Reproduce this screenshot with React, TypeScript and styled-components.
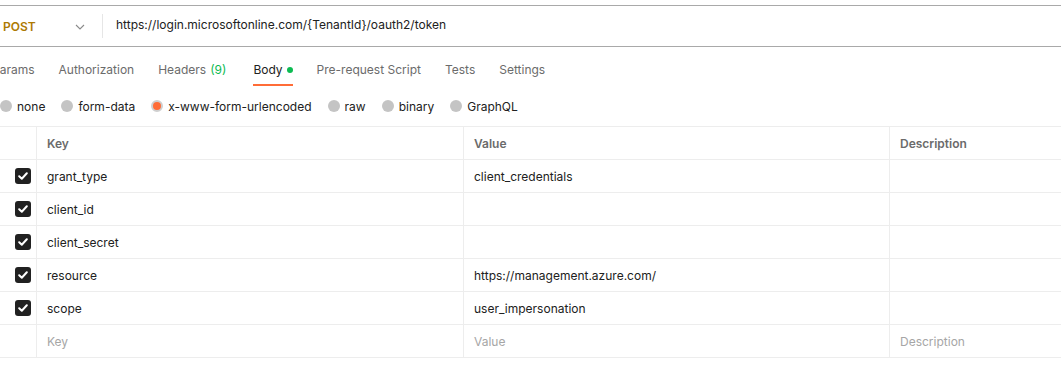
import React from 'react'
import styled, { createGlobalStyle } from 'styled-components'

const GlobalStyle = createGlobalStyle`
  html, body {
    margin: 0;
    padding: 0;
    background: #ffffff;
  }
  body {
    font-family: Inter, 'Noto Sans', 'Liberation Sans', sans-serif;
    color: #212121;
    overflow: hidden;
  }
`

const TABS = [
  { label: 'Params' },
  { label: 'Authorization' },
  { label: 'Headers', count: 9 },
  { label: 'Body', active: true, dot: true },
  { label: 'Pre-request Script' },
  { label: 'Tests' },
  { label: 'Settings' },
]

const BODY_TYPES = ['none', 'form-data', 'x-www-form-urlencoded', 'raw', 'binary', 'GraphQL']

const ROWS = [
  { key: 'grant_type', value: 'client_credentials' },
  { key: 'client_id', value: '' },
  { key: 'client_secret', value: '' },
  { key: 'resource', value: 'https://management.azure.com/' },
  { key: 'scope', value: 'user_impersonation' },
]

export default function App() {
  return (
    <Page>
      <GlobalStyle />
      <UrlBar>
        <MethodSelect>
          <Method>POST</Method>
          <svg width="10" height="6" viewBox="0 0 10 6" fill="none">
            <path d="M1 1l4 4 4-4" stroke="#8a8a8a" strokeWidth="1.1" />
          </svg>
        </MethodSelect>
        <Divider />
        <Url>https://login.microsoftonline.com/{'{TenantId}'}/oauth2/token</Url>
      </UrlBar>

      <Tabs>
        {TABS.map((tab) => (
          <Tab key={tab.label} active={!!tab.active}>
            {tab.label}
            {tab.count !== undefined && <Count>({tab.count})</Count>}
            {tab.dot && <Dot />}
          </Tab>
        ))}
      </Tabs>

      <Radios>
        {BODY_TYPES.map((type) => (
          <RadioItem key={type}>
            <Radio checked={type === 'x-www-form-urlencoded'} />
            {type}
          </RadioItem>
        ))}
      </Radios>

      <Table>
        <Row>
          <CheckCell />
          <HeadCell>Key</HeadCell>
          <HeadCell>Value</HeadCell>
          <HeadCell>Description</HeadCell>
        </Row>
        {ROWS.map((row) => (
          <Row key={row.key}>
            <CheckCell>
              <Checkbox>
                <svg width="10" height="8" viewBox="0 0 10 8" fill="none">
                  <path d="M1.2 4.2l2.6 2.5L8.8 1.3" stroke="#ffffff" strokeWidth="2" strokeLinecap="round" strokeLinejoin="round" />
                </svg>
              </Checkbox>
            </CheckCell>
            <Cell>{row.key}</Cell>
            <Cell>{row.value}</Cell>
            <Cell />
          </Row>
        ))}
        <Row>
          <CheckCell />
          <Cell placeholder>Key</Cell>
          <Cell placeholder>Value</Cell>
          <Cell placeholder>Description</Cell>
        </Row>
      </Table>
    </Page>
  )
}

const Page = styled.div`
  width: 1061px;
  height: 388px;
  overflow: hidden;
  padding-top: 5px;
  box-sizing: border-box;
`

const UrlBar = styled.div`
  display: flex;
  align-items: center;
  height: 42px;
  box-sizing: border-box;
  border-top: 1px solid #a9a9a9;
  border-bottom: 1px solid #a9a9a9;
`

const MethodSelect = styled.div`
  display: flex;
  align-items: center;
  justify-content: space-between;
  width: 86px;
  padding-left: 3px;
  padding-right: 1px;
  box-sizing: border-box;
  svg {
    margin-top: 1px;
  }
`

const Method = styled.span`
  font-size: 12px;
  font-weight: 600;
  color: #ad7a03;
  margin-top: 1px;
`

const Divider = styled.div`
  width: 1px;
  height: 24px;
  background: #e6e6e6;
  margin: 0 13px 0 16px;
`

const Url = styled.span`
  font-size: 12px;
  color: #212121;
  margin-top: -3px;
`

const Tabs = styled.div`
  display: flex;
  gap: 24px;
  margin-left: -8px;
  margin-top: 9px;
  height: 31px;
`

const Tab = styled.div<{ active: boolean }>`
  display: flex;
  align-items: center;
  height: 29px;
  font-size: 12px;
  color: ${({ active }) => (active ? '#212121' : '#6b6b6b')};
  border-bottom: 2px solid ${({ active }) => (active ? '#ff6c37' : 'transparent')};
  margin-top: -1px;
`

const Count = styled.span`
  color: #0cbb52;
  margin-left: 4px;
  margin-right: 3px;
`

const Dot = styled.span`
  width: 6px;
  height: 6px;
  border-radius: 50%;
  background: #0cbb52;
  margin-left: 4px;
  margin-top: 1px;
`

const Radios = styled.div`
  display: flex;
  gap: 16px;
  margin-top: 10px;
  height: 18px;
  align-items: center;
`

const RadioItem = styled.label`
  display: flex;
  align-items: center;
  gap: 5px;
  font-size: 12px;
  color: #212121;
`

const Radio = styled.span<{ checked: boolean }>`
  width: 12px;
  height: 12px;
  border-radius: 50%;
  box-sizing: border-box;
  background: ${({ checked }) => (checked ? '#ff6c37' : '#c4c4c4')};
  border: ${({ checked }) => (checked ? '2px solid #cfcfcf' : 'none')};
`

const Table = styled.div`
  margin-top: 11px;
  border-top: 1px solid #ededed;
`

const Row = styled.div`
  display: grid;
  grid-template-columns: 37px 427px 426px 1fr;
  height: 33px;
  box-sizing: border-box;
  border-bottom: 1px solid #ededed;
`

const CheckCell = styled.div`
  display: flex;
  align-items: center;
  justify-content: flex-end;
  padding-right: 5px;
  border-right: 1px solid #ededed;
`

const Checkbox = styled.span`
  display: flex;
  align-items: center;
  justify-content: center;
  width: 16px;
  height: 16px;
  border-radius: 3px;
  background: #212121;
`

const HeadCell = styled.div`
  display: flex;
  align-items: center;
  padding-left: 10px;
  font-size: 12px;
  font-weight: 600;
  color: #6b6b6b;
  border-right: 1px solid #ededed;
  &:last-child {
    border-right: none;
  }
`

const Cell = styled.div<{ placeholder?: boolean }>`
  display: flex;
  align-items: center;
  padding-left: 10px;
  font-size: 12px;
  color: ${({ placeholder }) => (placeholder ? '#a6a6a6' : '#212121')};
  border-right: 1px solid #ededed;
  &:last-child {
    border-right: none;
  }
`
